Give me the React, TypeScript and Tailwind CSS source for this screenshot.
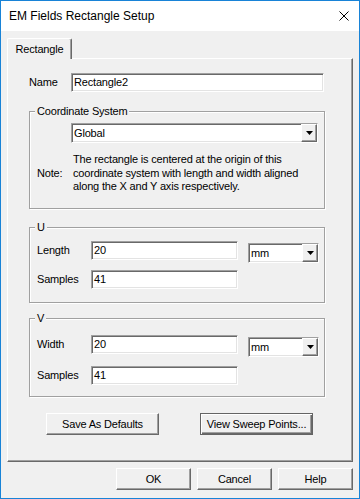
import React from "react";

const sunken =
  "border border-t-[#a0a0a0] border-l-[#a0a0a0] border-b-white border-r-white shadow-[inset_1px_1px_0_#696969,inset_-1px_-1px_0_#e3e3e3] bg-white";
const raised =
  "border border-t-white border-l-white border-b-[#696969] border-r-[#696969] shadow-[inset_-1px_-1px_0_#a0a0a0] bg-[#f0f0f0]";
const group =
  "ml-[21px] w-[296px] border border-[#a0a0a0] shadow-[inset_1px_1px_0_#ffffff,1px_1px_0_#ffffff] flex flex-col";

function Arrow() {
  return (
    <svg width="7" height="4" viewBox="0 0 7 4">
      <polygon points="0,0 7,0 3.5,4" fill="#000" />
    </svg>
  );
}

function Combo({ value, className }: { value: string; className: string }) {
  return (
    <div className={`${sunken} ${className} flex items-stretch`}>
      <div className="flex-1 pl-[2px] leading-[18px]">{value}</div>
      <div className={`${raised} w-[16px] flex items-center justify-center`}>
        <Arrow />
      </div>
    </div>
  );
}

function Legend({ children }: { children: React.ReactNode }) {
  return (
    <div className="-mt-[8px] ml-[5px] px-[2px] w-fit bg-[#f0f0f0] leading-[14px]">
      {children}
    </div>
  );
}

function Btn({ children, className }: { children: React.ReactNode; className: string }) {
  return (
    <div className={`${raised} ${className} flex items-center justify-center leading-none`}>
      {children}
    </div>
  );
}

export default function App() {
  return (
    <div className="w-[360px] h-[499px] border border-[#1883d7] bg-[#f0f0f0] flex flex-col text-[11px] tracking-[-0.18px] text-black font-['Liberation_Sans',Arial,sans-serif]">
      <div className="h-[30px] bg-white flex items-center justify-between pl-[8px] pr-[10px]">
        <span className="text-[12px] tracking-normal">EM Fields Rectangle Setup</span>
        <svg width="10" height="10" viewBox="0 0 10 10">
          <path d="M0.5 0.5 L9.5 9.5 M9.5 0.5 L0.5 9.5" stroke="#000" strokeWidth="1" />
        </svg>
      </div>
      <div className="flex-1 flex flex-col px-[6px] pt-[7px]">
        <div className="w-[65px] h-[21px] -mb-[1px] relative z-10 bg-[#f0f0f0] border-t border-l border-white border-r border-r-[#696969] shadow-[inset_-1px_0_0_#a0a0a0] rounded-t-[2px] flex items-center justify-center">
          Rectangle
        </div>
        <div className="h-[404px] border border-t-white border-l-white border-b-[#696969] border-r-[#696969] shadow-[inset_-1px_-1px_0_#a0a0a0] flex flex-col">
          <div className="mt-[14px] ml-[21px] flex items-center h-[19px]">
            <div className="w-[42px]">Name</div>
            <div className={`${sunken} w-[253px] h-[19px] pl-[2px] leading-[17px]`}>Rectangle2</div>
          </div>

          <div className={`${group} mt-[19px] h-[98px]`}>
            <Legend>Coordinate System</Legend>
            <Combo value="Global" className="mt-[5px] ml-[41px] w-[247px] h-[20px]" />
            <div className="mt-[10px] flex items-center">
              <div className="pl-[7px] w-[43px]">Note:</div>
              <div className="leading-[13.5px] whitespace-nowrap">
                The rectangle is centered at the origin of this
                <br />
                coordinate system with length and width aligned
                <br />
                along the X and Y axis respectively.
              </div>
            </div>
          </div>

          <div className={`${group} mt-[18px] h-[76px]`}>
            <Legend>U</Legend>
            <div className="mt-[7px] ml-[7px] flex items-start h-[19px]">
              <div className="w-[54px] leading-[19px]">Length</div>
              <div className={`${sunken} w-[147px] h-[19px] pl-[2px] leading-[17px]`}>20</div>
              <Combo value="mm" className="ml-[10px] mt-[2px] w-[71px] h-[20px] shrink-0" />
            </div>
            <div className="mt-[10px] ml-[7px] flex items-start h-[19px]">
              <div className="w-[54px] leading-[19px]">Samples</div>
              <div className={`${sunken} w-[147px] h-[19px] pl-[2px] leading-[17px]`}>41</div>
            </div>
          </div>

          <div className={`${group} mt-[15px] h-[79px]`}>
            <Legend>V</Legend>
            <div className="mt-[10px] ml-[7px] flex items-start h-[19px]">
              <div className="w-[54px] leading-[19px]">Width</div>
              <div className={`${sunken} w-[147px] h-[19px] pl-[2px] leading-[17px]`}>20</div>
              <Combo value="mm" className="ml-[10px] mt-[2px] w-[71px] h-[20px] shrink-0" />
            </div>
            <div className="mt-[12px] ml-[7px] flex items-start h-[19px]">
              <div className="w-[54px] leading-[19px]">Samples</div>
              <div className={`${sunken} w-[147px] h-[19px] pl-[2px] leading-[17px]`}>41</div>
            </div>
          </div>

          <div className="mt-[16px] ml-[38px] flex gap-[41px]">
            <Btn className="w-[113px] h-[22px]">Save As Defaults</Btn>
            <div className="w-[113px] h-[22px] border border-[#646464] bg-[#f0f0f0] shadow-[inset_1px_1px_0_#ffffff,inset_-1px_-1px_0_#696969,inset_-2px_-2px_0_#a0a0a0] flex items-center justify-center leading-none">
              View Sweep Points...
            </div>
          </div>
        </div>
        <div className="mt-[6px] flex justify-end gap-[6px]">
          <Btn className="w-[75px] h-[22px]">OK</Btn>
          <Btn className="w-[75px] h-[22px]">Cancel</Btn>
          <Btn className="w-[75px] h-[22px]">Help</Btn>
        </div>
      </div>
    </div>
  );
}
